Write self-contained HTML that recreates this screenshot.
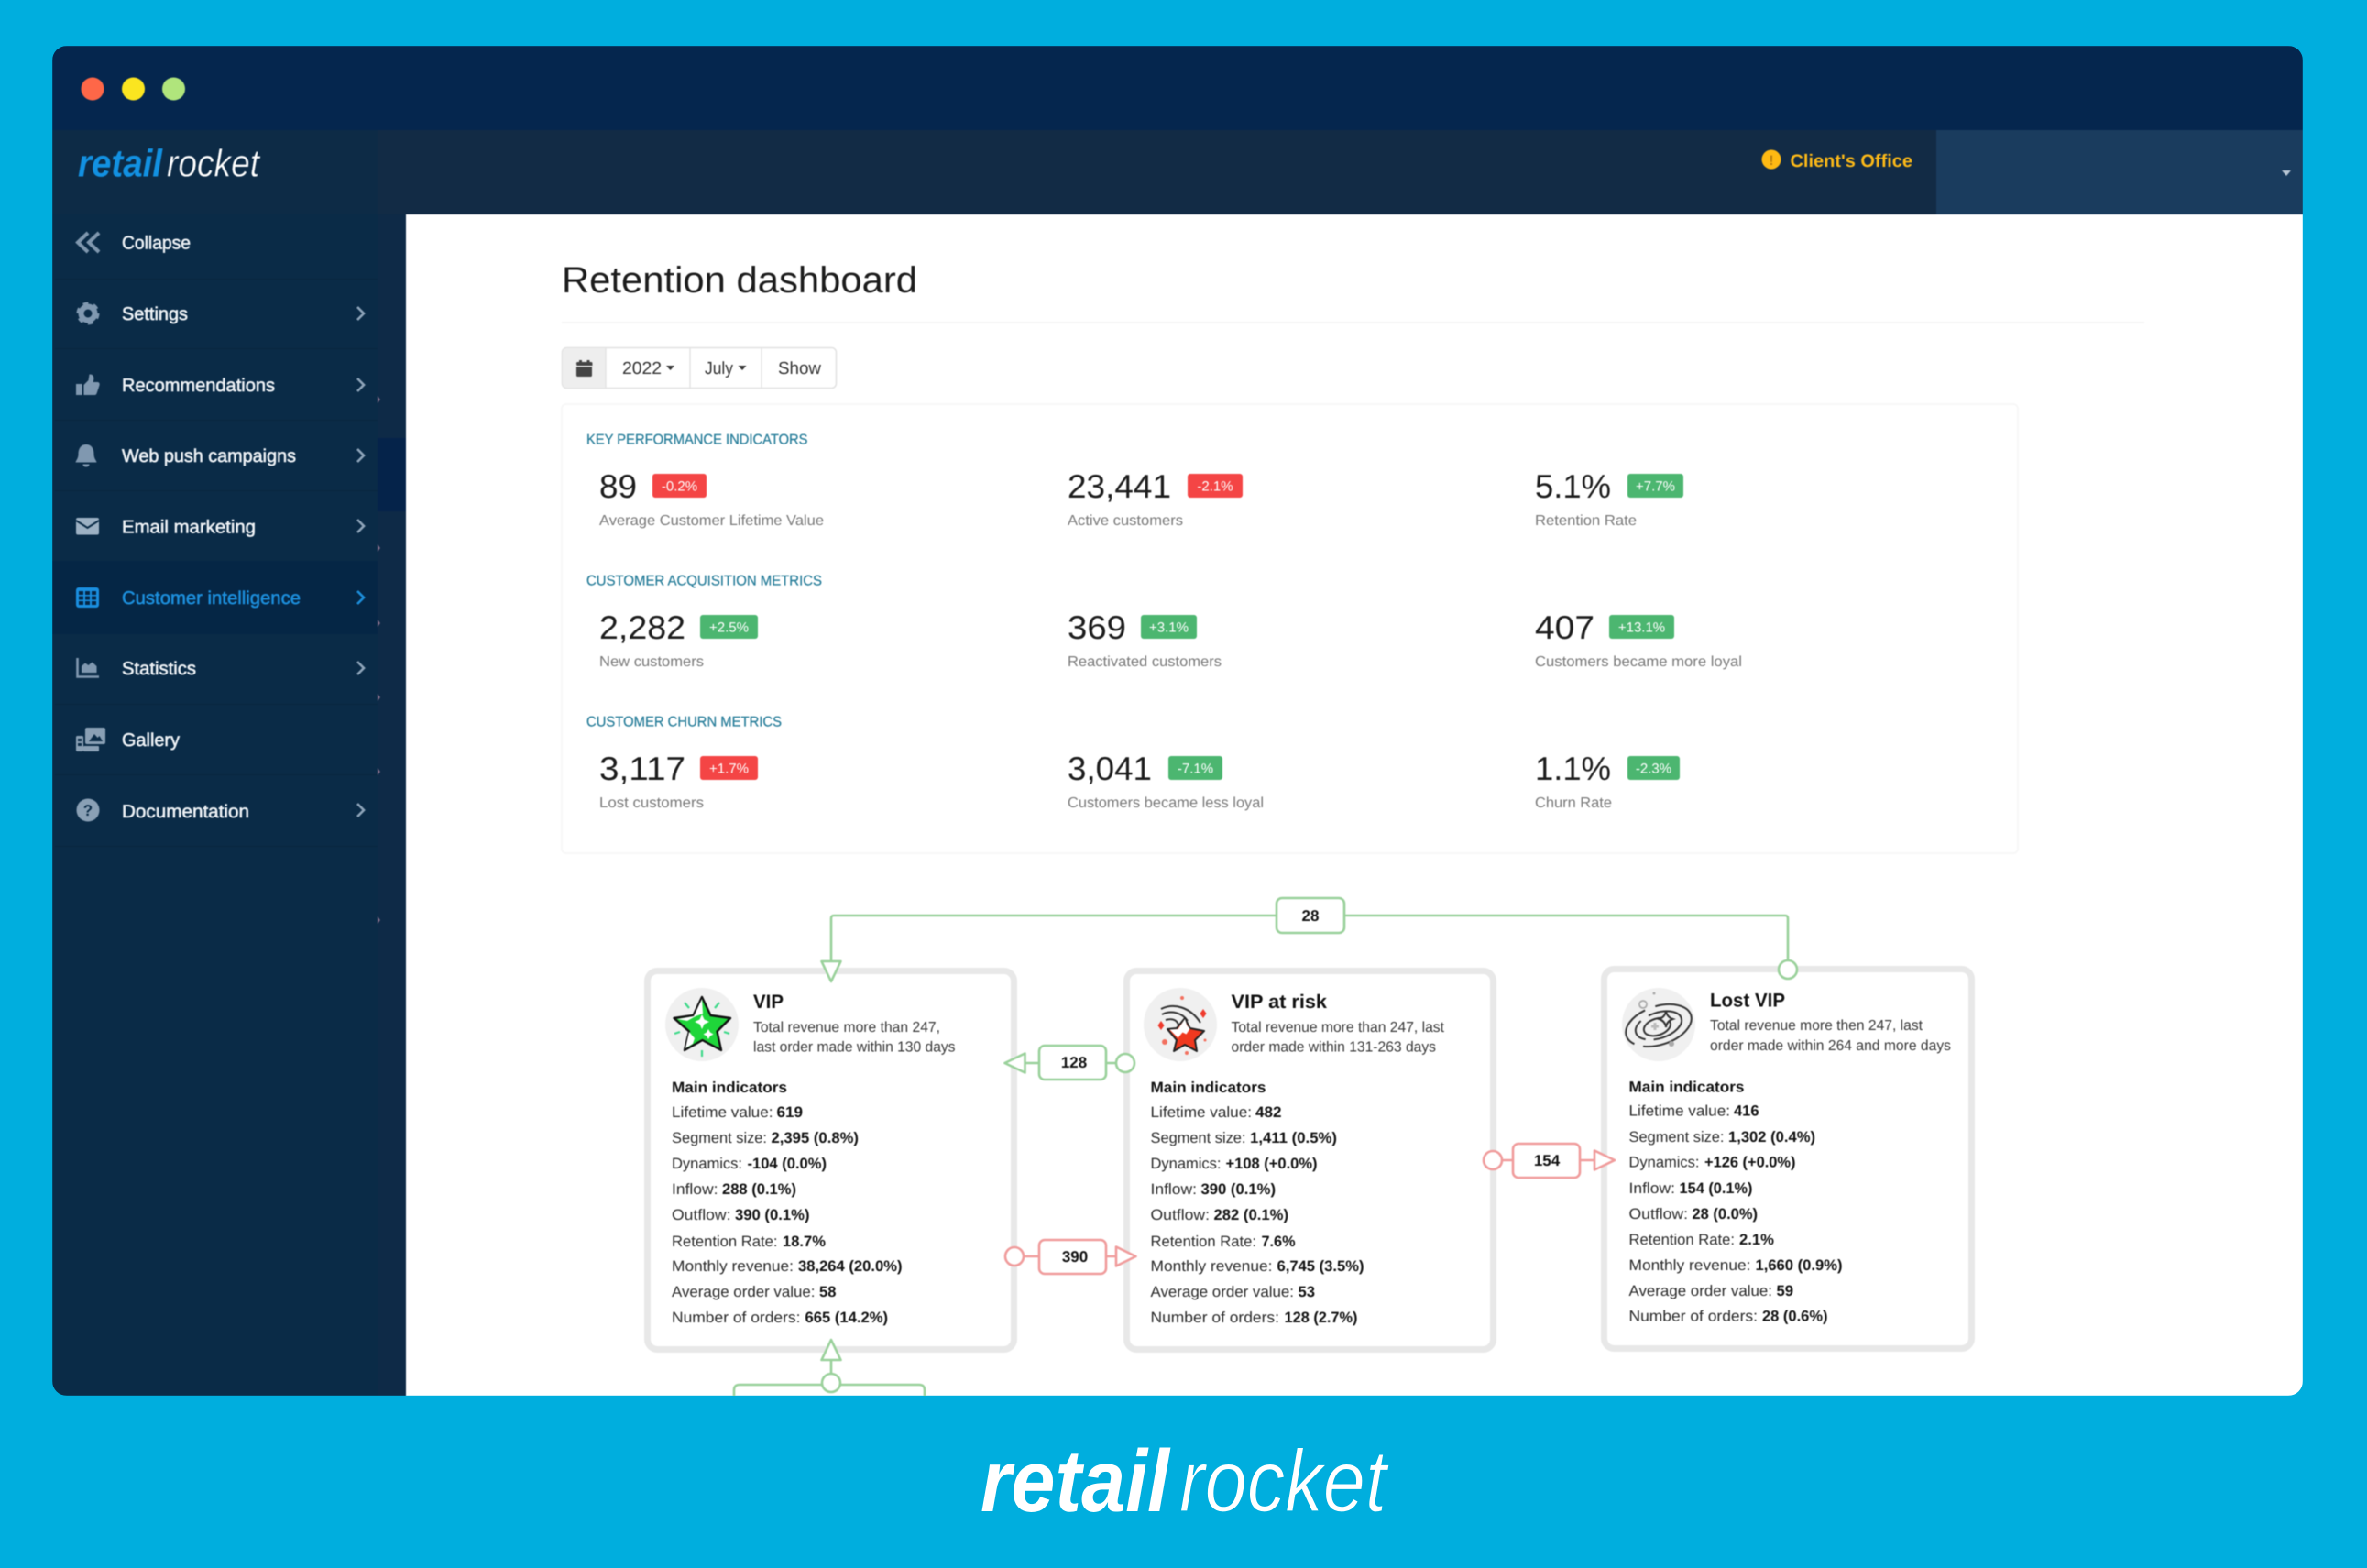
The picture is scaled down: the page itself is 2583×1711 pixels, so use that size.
<!DOCTYPE html>
<html lang="en">
<head>
<meta charset="utf-8">
<title>Retention dashboard</title>
<style>
html,body{margin:0;padding:0;background:#00aede;width:2583px;height:1711px;overflow:hidden}
svg{display:block}
text{font-family:"Liberation Sans",Arial,sans-serif;text-rendering:geometricPrecision}
.soft{filter:blur(.45px)}
.m{font-size:20px;fill:#eef2f6;stroke:#eef2f6;stroke-width:.55px}
.s{font-size:15.5px;fill:#2a7f9b;stroke:#2a7f9b;stroke-width:.25px}
.n{font-size:36px;fill:#1c1c1c}
.b{font-size:15px;fill:#fff;text-anchor:middle}
.c{font-size:16px;fill:#7a7a7a}
.g{font-size:19px;fill:#333}
.l{font-size:16.5px;fill:#2a2a2a}
.v{font-size:16.5px;fill:#111;font-weight:bold}
.t{font-size:21px;fill:#111;font-weight:bold}
.d{font-size:16px;fill:#3a3a3a}
.x{font-size:17px;fill:#111;font-weight:bold;text-anchor:middle}
.ic{fill:#8098b0}
.ch{fill:none;stroke:#8fa5ba;stroke-width:2.6}
.gc{fill:#fff;stroke:#9ad19b;stroke-width:2.6}
.rc{fill:#fff;stroke:#f09c9c;stroke-width:2.6}
.gl{fill:none;stroke:#9ad19b;stroke-width:2.6}
.rl{fill:none;stroke:#f09c9c;stroke-width:2.6}
</style>
</head>
<body>
<svg xmlns="http://www.w3.org/2000/svg" width="2583" height="1711" viewBox="0 0 2583 1711">
<defs><clipPath id="w"><rect x="57" y="50" width="2456" height="1473" rx="16"/></clipPath></defs>
<rect width="2583" height="1711" fill="#00aede"/>

<g clip-path="url(#w)">
<g class="soft">
<!-- window chrome -->
<rect x="57" y="50" width="2456" height="1473" fill="#05264e"/>
<circle cx="101" cy="97" r="12.5" fill="#fe6748"/>
<circle cx="145.500" cy="97" r="12.5" fill="#fbe520"/>
<circle cx="189.500" cy="97" r="12.5" fill="#b0e57c"/>

<!-- header -->
<rect x="57" y="142" width="2056" height="92" fill="#122b45"/>
<rect x="2113" y="142" width="400" height="92" fill="#1a3c5e"/>
<circle cx="1933" cy="174" r="10.500" fill="#fdb913"/>
<text x="1933" y="180" font-size="15" font-weight="bold" fill="#b57d10" text-anchor="middle">!</text>
<text x="1953.500" y="182" font-size="19.500" font-weight="bold" fill="#fcb918" textLength="133.500" lengthAdjust="spacingAndGlyphs">Client's Office</text>
<path d="M2490 186h10l-5 6z" fill="#b8c6d4"/>

<!-- sidebar -->
<rect x="57" y="234" width="355" height="1289" fill="#0a2b47"/>
<rect x="57" y="142" width="355" height="92" fill="#0d2b46"/>
<rect x="412" y="234" width="31" height="1289" fill="#0e2a47"/>
<rect x="412" y="478" width="31" height="80" fill="#05234a"/>
<path d="M412 432l3 4-3 4zM412 594l3 4-3 4zM412 676l3 4-3 4zM412 757l3 4-3 4zM412 838l3 4-3 4zM412 1000l3 4-3 4z" fill="#7e6a86"/>
<g fill="#08263f">
<rect x="60" y="304" width="352" height="1"/><rect x="60" y="380" width="352" height="1"/><rect x="60" y="458" width="352" height="1"/><rect x="60" y="535" width="352" height="1"/><rect x="60" y="768" width="352" height="1"/><rect x="60" y="845" width="352" height="1"/><rect x="60" y="923" width="352" height="1"/>
</g>
<rect x="57" y="612" width="355" height="80" fill="#052645"/>

<!-- top logo -->
<text x="85" y="192.500" font-size="42" font-weight="bold" font-style="italic" fill="#1291e2" textLength="92" lengthAdjust="spacingAndGlyphs">retail</text>
<text x="182" y="192.500" font-size="42" font-style="italic" fill="#fff" stroke="#0d2b46" stroke-width=".5" textLength="101" lengthAdjust="spacingAndGlyphs">rocket</text>

<!-- menu icons -->
<path d="M96 254l-11 10.500 11 10.500M108 254l-11 10.500 11 10.500" fill="none" stroke="#7f97ae" stroke-width="4"/>
<circle cx="96" cy="342" r="7.500" fill="none" stroke="#8098b0" stroke-width="6"/>
<circle cx="96" cy="342" r="10.500" fill="none" stroke="#8098b0" stroke-width="4" stroke-dasharray="5.500 5.500"/>
<path class="ic" d="M83 419h6.500v12H83zM91.500 420l5-5 1-6.500c4.500-.5 6 3.500 4 8.500h5c2 0 2.500 2 2 3.500l-3 9c-.5 1-1 1.500-2 1.500H91.500z"/>
<path class="ic" d="M94 485c-6 0-8.500 5-8.500 10.500 0 5-2.500 6.500-3 9h23c-.5-2.500-3-4-3-9C102.500 490 100 485 94 485zM90.500 506.500h7c0 4-7 4-7 0z"/>
<rect x="83" y="565" width="25" height="18.500" rx="2" fill="#9db1c4"/>
<path d="M83 568l12.500 8 12.500-8" fill="none" stroke="#0a2b47" stroke-width="2"/>
<rect x="83" y="641" width="25" height="22" rx="3" fill="#1a8fe0"/>
<path d="M86 645h5v4h-5zM93 645h5v4h-5zM100 645h5v4h-5zM86 650.500h5v4h-5zM93 650.500h5v4h-5zM100 650.500h5v4h-5zM86 656h5v4h-5zM93 656h5v4h-5zM100 656h5v4h-5z" fill="#052645"/>
<path d="M84.500 718v20.500H108" fill="none" stroke="#8098b0" stroke-width="2.600"/>
<path class="ic" d="M89 734v-7l4-3.500 3.500 2.500 4-3.500 5 4.500v7z"/>
<rect x="93" y="794" width="22" height="18" rx="2" fill="#8aa0b5"/>
<path d="M97 809l6-8 3.500 4 2-2 3.500 6z" fill="#0a2b47"/>
<rect x="83" y="803" width="8" height="17" rx="1.500" fill="#8aa0b5"/>
<path d="M85 806h4v3h-4zM85 811h4v3h-4z" fill="#0a2b47"/>
<rect x="91" y="814" width="17" height="6" rx="1" fill="#8aa0b5"/>
<circle cx="96" cy="884" r="12.500" fill="#8aa0b5"/>
<text x="96" y="890" font-size="17" font-weight="bold" fill="#0a2b47" text-anchor="middle">?</text>

<!-- menu text -->
<text class="m" x="133" y="271.500" textLength="75" lengthAdjust="spacingAndGlyphs">Collapse</text>
<text class="m" x="133" y="349" textLength="72" lengthAdjust="spacingAndGlyphs">Settings</text>
<text class="m" x="133" y="427" textLength="167" lengthAdjust="spacingAndGlyphs">Recommendations</text>
<text class="m" x="133" y="504" textLength="190" lengthAdjust="spacingAndGlyphs">Web push campaigns</text>
<text class="m" x="133" y="581.500" textLength="146" lengthAdjust="spacingAndGlyphs">Email marketing</text>
<text class="m" x="133" y="659" textLength="195" lengthAdjust="spacingAndGlyphs" style="fill:#1d8fdc;stroke:#1d8fdc">Customer intelligence</text>
<text class="m" x="133" y="736" textLength="81" lengthAdjust="spacingAndGlyphs">Statistics</text>
<text class="m" x="133" y="814" textLength="63" lengthAdjust="spacingAndGlyphs">Gallery</text>
<text class="m" x="133" y="892" textLength="139" lengthAdjust="spacingAndGlyphs">Documentation</text>

<!-- menu chevrons -->
<path class="ch" d="M390 335l7 7-7 7M390 413l7 7-7 7M390 490l7 7-7 7M390 567l7 7-7 7M390 722l7 7-7 7M390 877l7 7-7 7"/>
<path class="ch" style="stroke:#1d8fdc" d="M390 645l7 7-7 7"/>

<!-- main -->
<rect x="443" y="234" width="2070" height="1289" fill="#fff"/>
<text x="613" y="319" font-size="40" fill="#1c1c1c" textLength="388" lengthAdjust="spacingAndGlyphs">Retention dashboard</text>
<rect x="613" y="351" width="1727" height="2" fill="#f5f5f5"/>

<!-- button group -->
<rect x="613.500" y="379.500" width="299" height="44" rx="5" fill="#fff" stroke="#e2e2e2" stroke-width="1.500"/>
<path d="M661 380.500H618.500q-4.500 0-4.500 4.500v33q0 4.500 4.500 4.500H661z" fill="#eeeeee"/>
<path d="M661 380v43M753 380v43M831 380v43" stroke="#e4e4e4" stroke-width="1.500"/>
<path d="M629 396.500q0-1.500 1.500-1.500h1.500v-2h3v2h5.500v-2h3v2h1.500q1.500 0 1.500 1.500v2.500h-17zM629 400.500h17v9q0 1.500-1.500 1.500h-14q-1.500 0-1.500-1.500z" fill="#444"/>
<text class="g" x="679" y="408" textLength="43" lengthAdjust="spacingAndGlyphs">2022</text>
<path d="M727 399h9l-4.500 5z" fill="#333"/>
<text class="g" x="769" y="408" textLength="31" lengthAdjust="spacingAndGlyphs">July</text>
<path d="M805.500 399h9l-4.500 5z" fill="#333"/>
<text class="g" x="849" y="408" textLength="47" lengthAdjust="spacingAndGlyphs">Show</text>

<!-- KPI panel -->
<rect x="613" y="441" width="1589" height="490" rx="5" fill="#fff" stroke="#f7f7f7" stroke-width="2"/>
<text class="s" x="640" y="484.500" textLength="241.500" lengthAdjust="spacingAndGlyphs">KEY PERFORMANCE INDICATORS</text>
<text class="s" x="640" y="638.500" textLength="257" lengthAdjust="spacingAndGlyphs">CUSTOMER ACQUISITION METRICS</text>
<text class="s" x="640" y="792.500" textLength="213" lengthAdjust="spacingAndGlyphs">CUSTOMER CHURN METRICS</text>

<text class="n" x="654" y="543" textLength="41" lengthAdjust="spacingAndGlyphs">89</text>
<rect x="712" y="517" width="59" height="26" rx="3" fill="#f44545"/><text class="b" x="741.500" y="535.500">-0.2%</text>
<text class="c" x="654" y="573" textLength="245" lengthAdjust="spacingAndGlyphs">Average Customer Lifetime Value</text>
<text class="n" x="1165" y="543" textLength="113" lengthAdjust="spacingAndGlyphs">23,441</text>
<rect x="1296" y="517" width="60" height="26" rx="3" fill="#f44545"/><text class="b" x="1326" y="535.500">-2.1%</text>
<text class="c" x="1165" y="573" textLength="126" lengthAdjust="spacingAndGlyphs">Active customers</text>
<text class="n" x="1675" y="543" textLength="83" lengthAdjust="spacingAndGlyphs">5.1%</text>
<rect x="1776" y="517" width="61" height="26" rx="3" fill="#4cb670"/><text class="b" x="1806.500" y="535.500">+7.7%</text>
<text class="c" x="1675" y="573" textLength="111" lengthAdjust="spacingAndGlyphs">Retention Rate</text>

<text class="n" x="654" y="697" textLength="94" lengthAdjust="spacingAndGlyphs">2,282</text>
<rect x="764" y="671" width="63" height="26" rx="3" fill="#4cb670"/><text class="b" x="795.500" y="689.500">+2.5%</text>
<text class="c" x="654" y="727" textLength="114" lengthAdjust="spacingAndGlyphs">New customers</text>
<text class="n" x="1165" y="697" textLength="64" lengthAdjust="spacingAndGlyphs">369</text>
<rect x="1245" y="671" width="61" height="26" rx="3" fill="#4cb670"/><text class="b" x="1275.500" y="689.500">+3.1%</text>
<text class="c" x="1165" y="727" textLength="168" lengthAdjust="spacingAndGlyphs">Reactivated customers</text>
<text class="n" x="1675" y="697" textLength="65" lengthAdjust="spacingAndGlyphs">407</text>
<rect x="1756" y="671" width="71" height="26" rx="3" fill="#4cb670"/><text class="b" x="1791.500" y="689.500">+13.1%</text>
<text class="c" x="1675" y="727" textLength="226" lengthAdjust="spacingAndGlyphs">Customers became more loyal</text>

<text class="n" x="654" y="851" textLength="94" lengthAdjust="spacingAndGlyphs">3,117</text>
<rect x="764" y="825" width="63" height="26" rx="3" fill="#f44545"/><text class="b" x="795.500" y="843.500">+1.7%</text>
<text class="c" x="654" y="881" textLength="114" lengthAdjust="spacingAndGlyphs">Lost customers</text>
<text class="n" x="1165" y="851" textLength="92" lengthAdjust="spacingAndGlyphs">3,041</text>
<rect x="1275" y="825" width="59" height="26" rx="3" fill="#4cb670"/><text class="b" x="1304.500" y="843.500">-7.1%</text>
<text class="c" x="1165" y="881" textLength="214" lengthAdjust="spacingAndGlyphs">Customers became less loyal</text>
<text class="n" x="1675" y="851" textLength="83" lengthAdjust="spacingAndGlyphs">1.1%</text>
<rect x="1776" y="825" width="57" height="26" rx="3" fill="#4cb670"/><text class="b" x="1804.500" y="843.500">-2.3%</text>
<text class="c" x="1675" y="881" textLength="84" lengthAdjust="spacingAndGlyphs">Churn Rate</text>

<!-- cards -->
<rect x="706.500" y="1059.500" width="400" height="413" rx="11" fill="#fff" stroke="#e8e8e8" stroke-width="7"/>
<rect x="1229.500" y="1059.500" width="400" height="413" rx="11" fill="#fff" stroke="#e8e8e8" stroke-width="7"/>
<rect x="1750.500" y="1057.500" width="401" height="414" rx="11" fill="#fff" stroke="#e8e8e8" stroke-width="7"/>

<!-- avatars -->
<circle cx="766" cy="1118" r="40" fill="#f0f0f0"/>
<path d="M766 1088l9.500 20 21.500 3-14.500 14.500 4.500 20.500-20.500-11-19.500 11 5-20.500-16.500-14.500 21-3z" fill="#1fd63a" stroke="#111" stroke-width="2.400" stroke-linejoin="round"/>
<path d="M766 1090l-9 19-18 3 11 2 9-5 8-3zM752 1126l-4 18 8-5 2-6z" fill="#fff"/>
<path d="M766 1107l2.500 5.500 5.500 2.500-5.500 2.500-2.500 5.500-2.500-5.500-5.500-2.500 5.500-2.500zM773 1123l2 3.500 3.500 2-3.500 2-2 3.500-2-3.500-3.500-2 3.500-2z" fill="#fff"/>
<path d="M747 1094l5 6M785 1094l-5 6M736 1128l6-2M796 1128l-6-2M766 1146v7" stroke="#3fd98a" stroke-width="2.200" fill="none"/>

<circle cx="1288" cy="1118" r="40" fill="#f0f0f0"/>
<path d="M1267 1101c14-7 32-2 43 15M1268 1107c10-5 22-2 28 7M1272 1113c7-2 12 0 14 5" fill="none" stroke="#333" stroke-width="2"/>
<path d="M1293 1111l5.500 11 15.500 3-10 10 2 12-13-7-12 7 3-12-10-12 10-1z" fill="#f0391f" stroke="#222" stroke-width="2" stroke-linejoin="round"/>
<path d="M1293 1112l-7.500 11-9 .5 9 9 5-6 4 2 4-6-3-3z" fill="#fff"/>
<path d="M1313 1101l3.500 5-3.500 5-3.500-5zM1267 1114l3.500 5-3.500 5-3.500-5z" fill="#ef3a2c"/>
<circle cx="1290" cy="1089" r="2" fill="#f2705f"/><circle cx="1271" cy="1137" r="3" fill="#f2705f"/><circle cx="1295" cy="1149" r="2" fill="#f2705f"/><circle cx="1315" cy="1135" r="1.500" fill="#f2705f"/>

<circle cx="1810" cy="1118" r="40" fill="#f0f0f0"/>
<g fill="none" stroke="#333" stroke-width="2" transform="rotate(-18 1810 1119)">
<ellipse cx="1810" cy="1119" rx="37" ry="21" stroke-dasharray="70 10 50 12"/>
<ellipse cx="1810" cy="1119" rx="26" ry="14" stroke-dasharray="42 9 28 10"/>
<ellipse cx="1808" cy="1120" rx="15" ry="9"/>
</g>
<path d="M1818 1103q1 7 7.500 9-6.500 2-7.500 9-1-7-7.500-9 6.500-2 7.500-9z" fill="#f0f0f0" stroke="#333" stroke-width="2"/>
<path d="M1806 1116v8M1802 1120h8" stroke="#bbb" stroke-width="3"/>
<circle cx="1793" cy="1096" r="4" fill="#f0f0f0" stroke="#aaa" stroke-width="1.800"/>
<circle cx="1824" cy="1139" r="3" fill="#aaa"/><circle cx="1805" cy="1084" r="1.500" fill="#aaa"/>

<!-- card headings -->
<text class="t" x="822" y="1100" textLength="33" lengthAdjust="spacingAndGlyphs">VIP</text>
<text class="d" x="822" y="1126" textLength="204" lengthAdjust="spacingAndGlyphs">Total revenue more than 247,</text>
<text class="d" x="822" y="1147.500" textLength="220.500" lengthAdjust="spacingAndGlyphs">last order made within 130 days</text>
<text class="t" x="1343.500" y="1100" textLength="104.500" lengthAdjust="spacingAndGlyphs">VIP at risk</text>
<text class="d" x="1343.500" y="1126" textLength="232.500" lengthAdjust="spacingAndGlyphs">Total revenue more than 247, last</text>
<text class="d" x="1343.500" y="1147.500" textLength="223.500" lengthAdjust="spacingAndGlyphs">order made within 131-263 days</text>
<text class="t" x="1866" y="1098.500" textLength="82" lengthAdjust="spacingAndGlyphs">Lost VIP</text>
<text class="d" x="1866" y="1124" textLength="232" lengthAdjust="spacingAndGlyphs">Total revenue more then 247, last</text>
<text class="d" x="1866" y="1146" textLength="263" lengthAdjust="spacingAndGlyphs">order made within 264 and more days</text>

<!-- card 1 body -->
<g transform="translate(733 0)">
<text class="v" x="0" y="1192" textLength="126" lengthAdjust="spacingAndGlyphs">Main indicators</text>
<text class="l" x="0" y="1219" textLength="110.500" lengthAdjust="spacingAndGlyphs">Lifetime value:</text><text class="v" x="114.500" y="1219" textLength="28.500" lengthAdjust="spacingAndGlyphs">619</text>
<text class="l" x="0" y="1247" textLength="104" lengthAdjust="spacingAndGlyphs">Segment size:</text><text class="v" x="108.500" y="1247" textLength="95.500" lengthAdjust="spacingAndGlyphs">2,395 (0.8%)</text>
<text class="l" x="0" y="1275" textLength="77" lengthAdjust="spacingAndGlyphs">Dynamics:</text><text class="v" x="82.500" y="1275" textLength="86.500" lengthAdjust="spacingAndGlyphs">-104 (0.0%)</text>
<text class="l" x="0" y="1303" textLength="50.500" lengthAdjust="spacingAndGlyphs">Inflow:</text><text class="v" x="55" y="1303" textLength="81" lengthAdjust="spacingAndGlyphs">288 (0.1%)</text>
<text class="l" x="0" y="1331" textLength="64.500" lengthAdjust="spacingAndGlyphs">Outflow:</text><text class="v" x="69" y="1331" textLength="81.500" lengthAdjust="spacingAndGlyphs">390 (0.1%)</text>
<text class="l" x="0" y="1360" textLength="115.500" lengthAdjust="spacingAndGlyphs">Retention Rate:</text><text class="v" x="121" y="1360" textLength="47" lengthAdjust="spacingAndGlyphs">18.7%</text>
<text class="l" x="0" y="1387" textLength="133" lengthAdjust="spacingAndGlyphs">Monthly revenue:</text><text class="v" x="138" y="1387" textLength="113.500" lengthAdjust="spacingAndGlyphs">38,264 (20.0%)</text>
<text class="l" x="0" y="1415" textLength="156.500" lengthAdjust="spacingAndGlyphs">Average order value:</text><text class="v" x="161" y="1415" textLength="18.500" lengthAdjust="spacingAndGlyphs">58</text>
<text class="l" x="0" y="1443" textLength="140.500" lengthAdjust="spacingAndGlyphs">Number of orders:</text><text class="v" x="145.500" y="1443" textLength="90.500" lengthAdjust="spacingAndGlyphs">665 (14.2%)</text>
</g>

<!-- card 2 body -->
<g transform="translate(1255.500 0)">
<text class="v" x="0" y="1192" textLength="126" lengthAdjust="spacingAndGlyphs">Main indicators</text>
<text class="l" x="0" y="1219" textLength="110.500" lengthAdjust="spacingAndGlyphs">Lifetime value:</text><text class="v" x="114.500" y="1219" textLength="28.500" lengthAdjust="spacingAndGlyphs">482</text>
<text class="l" x="0" y="1247" textLength="104" lengthAdjust="spacingAndGlyphs">Segment size:</text><text class="v" x="108.500" y="1247" textLength="95" lengthAdjust="spacingAndGlyphs">1,411 (0.5%)</text>
<text class="l" x="0" y="1275" textLength="77" lengthAdjust="spacingAndGlyphs">Dynamics:</text><text class="v" x="82" y="1275" textLength="100" lengthAdjust="spacingAndGlyphs">+108 (+0.0%)</text>
<text class="l" x="0" y="1303" textLength="50.500" lengthAdjust="spacingAndGlyphs">Inflow:</text><text class="v" x="55" y="1303" textLength="81.500" lengthAdjust="spacingAndGlyphs">390 (0.1%)</text>
<text class="l" x="0" y="1331" textLength="64.500" lengthAdjust="spacingAndGlyphs">Outflow:</text><text class="v" x="69" y="1331" textLength="81.500" lengthAdjust="spacingAndGlyphs">282 (0.1%)</text>
<text class="l" x="0" y="1360" textLength="115.500" lengthAdjust="spacingAndGlyphs">Retention Rate:</text><text class="v" x="121" y="1360" textLength="37" lengthAdjust="spacingAndGlyphs">7.6%</text>
<text class="l" x="0" y="1387" textLength="133" lengthAdjust="spacingAndGlyphs">Monthly revenue:</text><text class="v" x="138" y="1387" textLength="95" lengthAdjust="spacingAndGlyphs">6,745 (3.5%)</text>
<text class="l" x="0" y="1415" textLength="156.500" lengthAdjust="spacingAndGlyphs">Average order value:</text><text class="v" x="161" y="1415" textLength="18.500" lengthAdjust="spacingAndGlyphs">53</text>
<text class="l" x="0" y="1443" textLength="140.500" lengthAdjust="spacingAndGlyphs">Number of orders:</text><text class="v" x="146" y="1443" textLength="80" lengthAdjust="spacingAndGlyphs">128 (2.7%)</text>
</g>

<!-- card 3 body -->
<g transform="translate(1777.500 0)">
<text class="v" x="0" y="1191.500" textLength="126" lengthAdjust="spacingAndGlyphs">Main indicators</text>
<text class="l" x="0" y="1217.500" textLength="110.500" lengthAdjust="spacingAndGlyphs">Lifetime value:</text><text class="v" x="114.500" y="1217.500" textLength="27.500" lengthAdjust="spacingAndGlyphs">416</text>
<text class="l" x="0" y="1246" textLength="104" lengthAdjust="spacingAndGlyphs">Segment size:</text><text class="v" x="108.500" y="1246" textLength="95" lengthAdjust="spacingAndGlyphs">1,302 (0.4%)</text>
<text class="l" x="0" y="1273.500" textLength="77" lengthAdjust="spacingAndGlyphs">Dynamics:</text><text class="v" x="82.500" y="1273.500" textLength="99.500" lengthAdjust="spacingAndGlyphs">+126 (+0.0%)</text>
<text class="l" x="0" y="1302" textLength="50.500" lengthAdjust="spacingAndGlyphs">Inflow:</text><text class="v" x="55" y="1302" textLength="80" lengthAdjust="spacingAndGlyphs">154 (0.1%)</text>
<text class="l" x="0" y="1330" textLength="64.500" lengthAdjust="spacingAndGlyphs">Outflow:</text><text class="v" x="69" y="1330" textLength="71.500" lengthAdjust="spacingAndGlyphs">28 (0.0%)</text>
<text class="l" x="0" y="1358" textLength="115.500" lengthAdjust="spacingAndGlyphs">Retention Rate:</text><text class="v" x="120.500" y="1358" textLength="38" lengthAdjust="spacingAndGlyphs">2.1%</text>
<text class="l" x="0" y="1386" textLength="133" lengthAdjust="spacingAndGlyphs">Monthly revenue:</text><text class="v" x="138" y="1386" textLength="95" lengthAdjust="spacingAndGlyphs">1,660 (0.9%)</text>
<text class="l" x="0" y="1414" textLength="156.500" lengthAdjust="spacingAndGlyphs">Average order value:</text><text class="v" x="161" y="1414" textLength="18.500" lengthAdjust="spacingAndGlyphs">59</text>
<text class="l" x="0" y="1441.500" textLength="140.500" lengthAdjust="spacingAndGlyphs">Number of orders:</text><text class="v" x="145.500" y="1441.500" textLength="71.500" lengthAdjust="spacingAndGlyphs">28 (0.6%)</text>
</g>

<!-- connectors -->
<path class="gl" d="M907 1050V1002q0-3 3-3H1393M1467 999H1948q3 0 3 3V1050"/>
<rect class="gc" x="1393" y="980" width="74" height="38" rx="6"/>
<text class="x" x="1430" y="1005">28</text>
<path class="gc" d="M896.500 1049h21l-10.500 22z" stroke-linejoin="round"/>
<circle class="gc" cx="1951" cy="1058" r="10"/>

<path class="gl" d="M1118 1160h16M1207 1160h11"/>
<rect class="gc" x="1134" y="1141" width="73" height="37" rx="6"/>
<text class="x" x="1172" y="1165">128</text>
<path class="gc" d="M1096.500 1160l22-10.500v21z" stroke-linejoin="round"/>
<circle class="gc" cx="1228" cy="1160" r="10"/>

<path class="rl" d="M1117 1371h17M1207 1371h11"/>
<rect class="rc" x="1134" y="1353" width="73" height="37" rx="6"/>
<text class="x" x="1173" y="1377">390</text>
<circle class="rc" cx="1107" cy="1371" r="10"/>
<path class="rc" d="M1218 1360.500l21.500 10.500-21.500 10.500z" stroke-linejoin="round"/>

<path class="rl" d="M1639 1266h12M1724 1266h16"/>
<rect class="rc" x="1651" y="1248" width="73" height="37" rx="6"/>
<text class="x" x="1688" y="1272">154</text>
<circle class="rc" cx="1629" cy="1266" r="10"/>
<path class="rc" d="M1740 1255.500l22 10.500-22 10.500z" stroke-linejoin="round"/>

<path class="gl" d="M907 1484v16M897 1511H807q-6 0-6 6v12M917 1511h86q6 0 6 6v12"/>
<path class="gc" d="M907 1462l10.500 22h-21z" stroke-linejoin="round"/>
<circle class="gc" cx="907" cy="1509" r="10"/>
</g>
</g>

<!-- bottom logo -->
<text x="1070" y="1649" font-size="96" font-weight="bold" font-style="italic" fill="#fff" textLength="206" lengthAdjust="spacingAndGlyphs">retail</text>
<text x="1287" y="1649" font-size="96" font-style="italic" fill="#fff" stroke="#00aede" stroke-width="1.2" textLength="226" lengthAdjust="spacingAndGlyphs">rocket</text>
</svg>
</body>
</html>
